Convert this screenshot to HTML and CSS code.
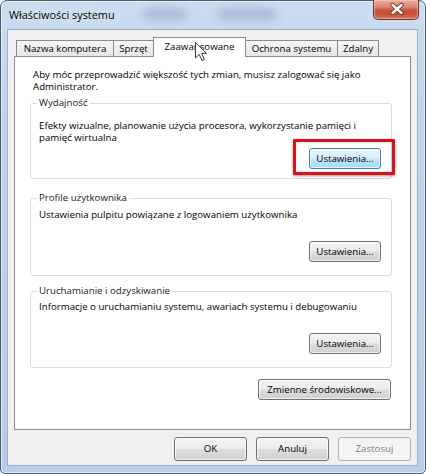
FILE: index.html
```html
<!DOCTYPE html>
<html lang="pl">
<head>
<meta charset="utf-8">
<title>Właściwości systemu</title>
<link rel="stylesheet" href="styles.css">
</head>
<body>
<div class="window">
  <div class="titlebar">
    <span class="glass glass-a"></span>
    <span class="glass glass-b"></span>
    <span class="title">Właściwości systemu</span>
    <button class="close" aria-label="Zamknij">
      <svg width="46" height="20" viewBox="0 0 46 20">
        <path d="M18.5 5 L27.5 13 M27.5 5 L18.5 13" stroke="#6a2a20" stroke-width="4.2" stroke-linecap="round" fill="none"/>
        <path d="M18.5 5 L27.5 13 M27.5 5 L18.5 13" stroke="#ffffff" stroke-width="2.4" stroke-linecap="round" fill="none"/>
      </svg>
    </button>
  </div>
  <div class="client">
    <div class="tabs">
      <div class="tab t1">Nazwa komputera</div>
      <div class="tab t2">Sprzęt</div>
      <div class="tab t3 active">Zaawansowane</div>
      <div class="tab t4">Ochrona systemu</div>
      <div class="tab t5">Zdalny</div>
    </div>
    <div class="panel">
      <p class="intro">Aby móc przeprowadzić większość tych zmian, musisz zalogować się jako<br>Administrator.</p>
      <fieldset class="group g-perf">
        <legend>Wydajność</legend>
        <p>Efekty wizualne, planowanie użycia procesora, wykorzystanie pamięci i<br>pamięć wirtualna</p>
        <div class="row"><button class="btn set hot">Ustawienia...</button></div>
      </fieldset>
      <fieldset class="group g-prof">
        <legend>Profile użytkownika</legend>
        <p>Ustawienia pulpitu powiązane z logowaniem użytkownika</p>
        <div class="row"><button class="btn set">Ustawienia...</button></div>
      </fieldset>
      <fieldset class="group g-boot">
        <legend>Uruchamianie i odzyskiwanie</legend>
        <p>Informacje o uruchamianiu systemu, awariach systemu i debugowaniu</p>
        <div class="row"><button class="btn set">Ustawienia...</button></div>
      </fieldset>
      <div class="row env"><button class="btn wide">Zmienne środowiskowe...</button></div>
    </div>
    <div class="actions">
      <button class="btn act">OK</button>
      <button class="btn act">Anuluj</button>
      <button class="btn act" disabled>Zastosuj</button>
    </div>
  </div>
  <div class="annot"></div>
  <svg class="cursor" width="13" height="20" viewBox="0 0 13 20">
    <path d="M0.5 0.5 L0.5 16 L4.2 12.4 L7 18.6 L9.4 17.6 L6.7 11.4 L11.6 11.4 Z" fill="#ffffff" stroke="#3a3a3a" stroke-width="1" stroke-linejoin="round"/>
  </svg>
</div>
</body>
</html>
```
FILE: styles.css
```css
* { box-sizing: border-box; }

body {
  margin: 0;
  background: #ffffff;
  font-family: "Open Sans", "Noto Sans", sans-serif;
  font-size: 9.7px;
  line-height: 12px;
  color: #000;
}

.window {
  position: relative;
  width: 426px;
  height: 474px;
  border: 1px solid #4b5b70;
  border-radius: 7px 7px 5px 5px;
  background: linear-gradient(180deg, #cbddf1 0%, #c0d4ec 25%, #b8cee8 100%);
  box-shadow: inset 0 0 0 1px rgba(255, 255, 255, 0.55);
  padding: 0 7px 7px 6px;
  display: flex;
  flex-direction: column;
}

.titlebar {
  position: relative;
  height: 28px;
  margin: 0 -7px 0 -6px;
  padding-left: 8px;
  display: flex;
  align-items: center;
}

.glass {
  position: absolute;
  top: 7px;
  height: 13px;
  border-radius: 6px;
  background: rgba(110, 135, 170, 0.35);
  filter: blur(4px);
}
.glass-a { left: 142px; width: 44px; }
.glass-b { left: 216px; width: 60px; }

.title {
  position: relative;
  font-size: 10.9px;
  color: #000;
  text-shadow: 0 0 6px rgba(255, 255, 255, 0.8);
}

.close {
  align-self: flex-start;
  margin: -1px 6px 0 auto;
  width: 46px;
  height: 20px;
  padding: 0;
  border: 1px solid #6d3328;
  border-top: none;
  border-radius: 0 0 5px 5px;
  background: linear-gradient(180deg, #e8ab9b 0%, #db8a76 35%, #c9523c 55%, #c8513b 75%, #dc7a60 100%);
  box-shadow: inset 0 0 0 1px rgba(255, 220, 210, 0.45);
  display: block;
}
.close svg { display: block; }

.client {
  flex: 1;
  background: #f0f0f0;
  border: 1px solid #9cb1c8;
  padding: 0 6px;
  display: flex;
  flex-direction: column;
}

.tabs {
  margin-top: 7px;
  height: 19px;
  padding-left: 2px;
  display: flex;
  align-items: flex-end;
  position: relative;
  z-index: 1;
}

.tab {
  flex: none;
  height: 16px;
  margin-left: -1px;
  border: 1px solid #898c95;
  border-bottom: none;
  background: linear-gradient(180deg, #f6f6f6 0%, #eeeeee 50%, #e6e6e6 100%);
  text-align: center;
  line-height: 16px;
  white-space: nowrap;
}
.t1 { margin-left: 0; width: 98px; }
.t2 { width: 41px; }
.t3 { width: 93px; }
.t4 { width: 93px; }
.t5 { width: 42px; }

.tab.active {
  height: 20px;
  margin-bottom: -1px;
  background: #ffffff;
  position: relative;
  z-index: 2;
  line-height: 18px;
}

.panel {
  height: 374px;
  border: 1px solid #898c95;
  background: #ffffff;
  padding: 12px 18px 0 15px;
  display: flex;
  flex-direction: column;
}

p { margin: 0; white-space: nowrap; }

.intro { padding-left: 3px; margin-bottom: 4px; }

.group {
  margin: 0;
  min-width: 0;
  border: 1px solid #d5dfe5;
  border-radius: 3px;
  padding: 0 10px 9px 8px;
}
.group legend {
  padding: 0 2px;
  margin-left: -2px;
  line-height: 12px;
  color: #1a1a1a;
}

.g-perf { padding-top: 11px; }
.g-perf .row { margin-top: 4px; }

.g-prof { margin-top: 13px; padding-top: 5px; padding-bottom: 13px; }
.g-prof .row { margin-top: 20px; }

.g-boot { margin-top: 9px; padding-top: 4px; padding-bottom: 13px; }
.g-boot .row { margin-top: 20px; }

.row { display: flex; justify-content: flex-end; }

.env { margin-top: 11px; padding-right: 1px; }

.btn {
  font: inherit;
  color: #000;
  padding: 0;
  height: 21px;
  border: 1px solid #707070;
  border-radius: 3px;
  background: linear-gradient(180deg, #f3f3f3 0%, #ebebeb 48%, #dddddd 52%, #d0d0d0 100%);
  box-shadow: inset 0 0 0 1px rgba(255, 255, 255, 0.7);
  white-space: nowrap;
}
.set { width: 72px; }
.wide { width: 133px; }

.btn.hot {
  border-color: #3c7fb1;
  background: linear-gradient(180deg, #eaf6fd 0%, #d9f0fc 48%, #bee6fd 52%, #a7d9f5 100%);
}

.actions {
  margin-top: 7px;
  display: flex;
  justify-content: flex-end;
  gap: 9px;
}
.act { width: 73px; height: 24px; }

.btn:disabled {
  border-color: #adb2b5;
  background: #f4f4f4;
  color: #838383;
  box-shadow: none;
}

.annot {
  position: absolute;
  left: 292px;
  top: 138px;
  width: 102px;
  height: 36px;
  border: 3px solid #d3141c;
  border-radius: 1px;
  box-shadow: 0 1px 3px rgba(60, 0, 0, 0.45), inset 0 0 2px rgba(120, 0, 0, 0.3);
}

.cursor {
  position: absolute;
  left: 194px;
  top: 41px;
  z-index: 5;
}
```
